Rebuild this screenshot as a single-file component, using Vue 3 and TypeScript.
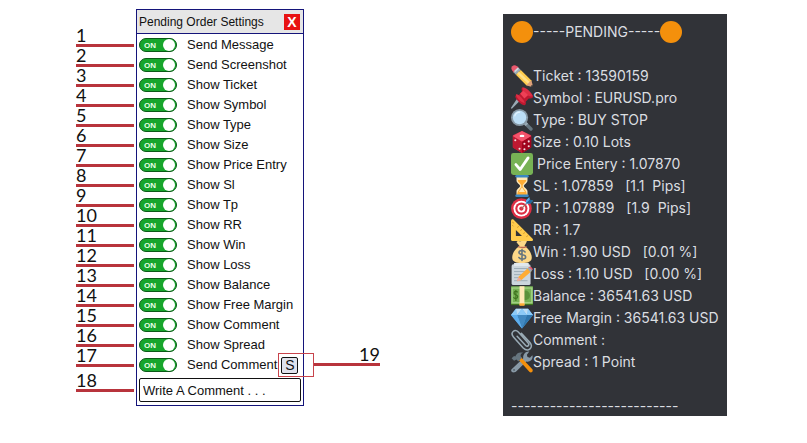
<script setup lang="ts">
import { reactive, ref } from 'vue'

interface Option {
  label: string
  on: boolean
}

interface Line {
  icon: string
  text: string
}

const options = reactive<Option[]>(
  [
    'Send Message',
    'Send Screenshot',
    'Show Ticket',
    'Show Symbol',
    'Show Type',
    'Show Size',
    'Show Price Entry',
    'Show Sl',
    'Show Tp',
    'Show RR',
    'Show Win',
    'Show Loss',
    'Show Balance',
    'Show Free Margin',
    'Show Comment',
    'Show Spread',
    'Send Comment',
  ].map((label) => ({ label, on: true })),
)

const comment = ref('Write A Comment . . .')

const lines: Line[] = [
  { icon: 'pencil', text: 'Ticket : 13590159' },
  { icon: 'pin', text: 'Symbol : EURUSD.pro' },
  { icon: 'lens', text: 'Type : BUY STOP' },
  { icon: 'die', text: 'Size : 0.10 Lots' },
  { icon: 'check', text: ' Price Entery : 1.07870' },
  { icon: 'hourglass', text: 'SL : 1.07859   [1.1  Pips]' },
  { icon: 'target', text: 'TP : 1.07889   [1.9  Pips]' },
  { icon: 'ruler', text: 'RR : 1.7' },
  { icon: 'bag', text: 'Win : 1.90 USD   [0.01 %]' },
  { icon: 'memo', text: 'Loss : 1.10 USD   [0.00 %]' },
  { icon: 'cash', text: 'Balance : 36541.63 USD' },
  { icon: 'gem', text: 'Free Margin : 36541.63 USD' },
  { icon: 'clip', text: 'Comment :' },
  { icon: 'tools', text: 'Spread : 1 Point' },
]
</script>

<template>
  <svg class="defs" aria-hidden="true">
    <symbol id="dot" viewBox="0 0 36 36"><circle cx="18" cy="18" r="18" fill="#f4900c" /></symbol>
    <symbol id="pencil" viewBox="0 0 36 36">
      <path fill="#ea596e" d="M2 9C0 6 0 4 2 2s5-2 8 0l3 3-8 8z" />
      <path fill="#99aab5" d="M4 12l8-8 4 4-8 8z" />
      <path fill="#ccd6dd" d="M5 10l6-6 2 2-6 6z" />
      <path fill="#ffcc4d" d="M8 16l8-8 17 17 1 6-3 3-6-1z" />
      <path fill="#ffe08a" d="M10 14l3-3 19 18-3 3z" />
      <path fill="#dda07a" d="M25 33l8-8 3 9c0 1-1 2-2 2z" />
      <path fill="#292f33" d="M32 35l3-3 1 3-1 1z" />
    </symbol>
    <symbol id="pin" viewBox="0 0 36 36">
      <path d="M17 20l-5-4L0 34l1 2z" fill="#99aab5" />
      <path d="M18 1c3-1 5 2 6 4l9 6c3 2 4 5 2 7-2 1-4 1-6 1l-5 5c1 3 0 6-2 6-4 0-14-9-15-14 0-3 3-4 6-3l5-6c-1-2-1-5 0-6z" fill="#be1931" />
      <path d="M19 1c5-2 17 10 16 14-5 3-18-8-16-14zM8 12c3-2 15 10 14 14C17 26 8 17 8 12z" fill="#dd2e44" />
      <path d="M15 11l5-5 8 7-6 6z" fill="#ef4056" />
    </symbol>
    <symbol id="lens" viewBox="0 0 36 36">
      <path d="M22 26l4-4 9 9c2 3-2 6-4 4z" fill="#66757f" />
      <path d="M21 25l4-4 3 3-4 4z" fill="#99aab5" />
      <circle cx="14" cy="14" r="14" fill="#8899a6" />
      <circle cx="14" cy="14" r="11" fill="#bbddf5" />
      <path d="M6 12c1-5 5-7 9-7" stroke="#e1f2fd" stroke-width="2" fill="none" />
    </symbol>
    <symbol id="die" viewBox="0 0 36 36">
      <path d="M18 0L3 7v20l15 9 15-9V7z" fill="#dd2e44" />
      <path d="M3 8l15 9v19L4 28c-1-1-1-2-1-3z" fill="#be1931" />
      <path d="M33 8l-15 9v19l14-8c1-1 1-2 1-3z" fill="#a0041e" />
      <path d="M18 0L3 8l15 9 15-9z" fill="#f4536b" />
      <ellipse cx="18" cy="8" rx="4" ry="2" fill="#fff" />
      <g fill="#f5dfe2"><circle cx="7" cy="15" r="1.7" /><circle cx="14" cy="29" r="1.7" /><circle cx="22" cy="21" r="1.7" /><circle cx="29" cy="17" r="1.7" /><circle cx="22" cy="30" r="1.7" /><circle cx="29" cy="25" r="1.7" /></g>
    </symbol>
    <symbol id="check" viewBox="0 0 36 36">
      <rect width="36" height="36" rx="4" fill="#77b255" />
      <path d="M8 19l7 8L28 8" fill="none" stroke="#fff" stroke-width="4.6" stroke-linecap="round" stroke-linejoin="round" />
    </symbol>
    <symbol id="hourglass" viewBox="0 0 36 36">
      <path d="M9 2h18v7c0 4-6 7-6 9s6 5 6 9v7H9v-7c0-4 6-7 6-9s-6-5-6-9z" fill="#ffe8b6" />
      <path d="M11 8h14c0 4-6 6-6 10s7 7 7 15H10c0-8 7-11 7-15s-6-6-6-10z" fill="#ffac33" />
      <path d="M18 20l5 8H13z" fill="#ffe8b6" />
      <rect x="7" width="22" height="4" rx="2" fill="#3b88c3" /><rect x="7" y="32" width="22" height="4" rx="2" fill="#3b88c3" />
    </symbol>
    <symbol id="target" viewBox="0 0 36 36">
      <circle cx="17" cy="19" r="17" fill="#dd2e44" /><circle cx="17" cy="19" r="13" fill="#fff" />
      <circle cx="17" cy="19" r="10" fill="#dd2e44" /><circle cx="17" cy="19" r="6.5" fill="#fff" /><circle cx="17" cy="19" r="3.5" fill="#dd2e44" />
      <path d="M17 19L30 6" stroke="#a66f62" stroke-width="2" />
      <path d="M24 11l1-6 5-5 1 5 5 1-5 5z" fill="#55acee" /><path d="M25 10l6-6 5 2-5 5z" fill="#269" />
    </symbol>
    <symbol id="ruler" viewBox="0 0 36 36">
      <path fill-rule="evenodd" d="M1 1c1-1 2-1 3 0l31 31c2 2 1 4-1 4H2c-1 0-2-1-2-2V3zM8 18v10h10z" fill="#ffcc4d" />
      <path d="M2 5l3 2M2 10l2 2M13 12l-3 2M18 17l-3 2M23 22l-3 2M28 27l-3 2" stroke="#c1851b" />
    </symbol>
    <symbol id="bag" viewBox="0 0 36 36">
      <path d="M14 8L9 2c3-4 5 0 8-2 3 1 7-3 9 1l-4 7c7 4 12 12 12 19 0 7-6 9-16 9S2 34 2 27C2 20 7 12 14 8z" fill="#fdd888" />
      <path d="M12 8c4 2 9 2 13 0l1 2c-5 3-11 2-15 0z" fill="#bf6952" />
      <path d="M23 18c-3-4-10-3-10 1 0 5 11 2 11 7 0 4-8 5-11 1M18 14v18" fill="none" stroke="#67757f" stroke-width="2.6" stroke-linecap="round" />
    </symbol>
    <symbol id="memo" viewBox="0 0 36 36">
      <rect x="1" y="2" width="31" height="34" rx="3" fill="#ccd6dd" />
      <path d="M5 0h24v5H5z" fill="#e1e8ed" />
      <path d="M5 9h22M5 14h20M5 19h15M5 24h12M5 29h22" stroke="#99aab5" stroke-width="1.5" />
      <path d="M12 23L29 7l5 6-17 15-7 2z" fill="#ffac33" /><path d="M12 23l5 5-7 2z" fill="#e6aaaa" />
      <path d="M27 9l3-3 5 5-3 4z" fill="#99aab5" /><path d="M29 7c2-3 8 1 6 5z" fill="#ea596e" />
    </symbol>
    <symbol id="cash" viewBox="0 0 36 36">
      <rect y="4" width="36" height="29" fill="#3e721d" /><rect width="36" height="29" y="2" rx="1" fill="#77b255" />
      <rect x="2" y="5" width="32" height="24" fill="none" stroke="#a6d388" stroke-width="2" />
      <circle cx="23" cy="17" r="8" fill="#5c913b" />
      <path d="M11 12c-2-3-6-2-6 1 0 4 6 2 6 6 0 4-5 4-7 1M8 8v18" fill="none" stroke="#3e721d" stroke-width="1.8" />
      <rect x="14" y="2" width="8" height="31" fill="#ffe8b6" /><rect x="14" y="30" width="8" height="4" fill="#ffac33" />
    </symbol>
    <symbol id="gem" viewBox="0 0 36 36">
      <path d="M8 3h20l8 10-18 22L0 13z" fill="#5dadec" />
      <path d="M8 3L0 13h10zM28 3l8 10H26z" fill="#8ccaf7" />
      <path d="M8 3h10l-8 10zM28 3H18l8 10z" fill="#bdddf4" /><path d="M18 3l-8 10h16z" fill="#8ccaf7" />
      <path d="M10 13h16l-8 22z" fill="#4289c1" /><path d="M26 13h10L18 35z" fill="#2f76ad" /><path d="M0 13h10l8 22z" fill="#5dadec" />
    </symbol>
    <symbol id="clip" viewBox="0 0 36 36">
      <path d="M10 12l14 15c3 3 7-1 4-4L12 5C6-1-2 6 4 13l16 18c8 8 18-1 11-9L17 7" fill="none" stroke="#99aab5" stroke-width="2.5" stroke-linecap="round" />
    </symbol>
    <symbol id="tools" viewBox="0 0 36 36">
      <path d="M4 35c-3 0-5-3-3-5l19-18c-1-6 4-12 10-11l-4 5 1 4 4 1 4-4c2 6-4 12-10 10L8 34c-1 1-3 1-4 1z" fill="#8899a6" />
      <circle cx="5" cy="31" r="1.5" fill="#546069" />
      <path d="M12 14l4-4 19 20c2 3-2 7-5 4z" fill="#f4900c" />
      <path d="M1 12l4-4 2 1C9 4 13 1 20 3c-3 1-5 3-4 6l2 2-6 6-3-3-4 2z" fill="#66757f" />
    </symbol>
  </svg>

  <main class="page">
    <section class="guide">
      <ol class="marks">
        <li v-for="n in 18" :key="n" class="mark">{{ n }}</li>
      </ol>

      <form class="panel" @submit.prevent>
        <header class="panel-head">
          <h1 class="panel-title">Pending Order Settings</h1>
          <button type="button" class="close" aria-label="Close">X</button>
        </header>
        <div v-for="(option, i) in options" :key="option.label" class="option">
          <label class="option-label">
            <input v-model="option.on" type="checkbox" class="check" />
            <span class="track"><span>{{ option.on ? 'ON' : 'OFF' }}</span><i class="knob"></i></span>
            <span class="option-text">{{ option.label }}</span>
          </label>
          <span v-if="i === options.length - 1" class="send-wrap">
            <button type="button" class="send">S</button>
            <i class="focus-box"></i>
          </span>
        </div>
        <input v-model="comment" type="text" class="comment" aria-label="Comment" />
      </form>

      <div class="mark side-mark">19</div>
    </section>

    <section class="message">
      <p class="line">
        <svg class="emoji"><use href="#dot" /></svg><span>-----PENDING-----</span><svg class="emoji"><use href="#dot" /></svg>
      </p>
      <p class="line"></p>
      <p v-for="line in lines" :key="line.icon" class="line">
        <svg class="emoji"><use :href="'#' + line.icon" /></svg><span>{{ line.text }}</span>
      </p>
      <p class="line"></p>
      <p class="line">--------------------------</p>
    </section>
  </main>
</template>

<style>
body {
  background: #fff;
}
</style>

<style scoped>
.defs {
  position: absolute;
  width: 0;
  height: 0;
}
.page {
  display: flex;
  justify-content: space-between;
  align-items: flex-start;
  box-sizing: border-box;
  padding: 9px 80px 27px 76px;
  font-family: "Liberation Sans", Arial, sans-serif;
}
.guide {
  display: flex;
}
.marks {
  width: 58px;
  margin: 18px 2px 0 0;
  padding: 0;
  list-style: none;
}
.mark {
  box-sizing: border-box;
  height: 20px;
  border-bottom: 3px solid #b8343c;
  color: #111;
  font: 18px/17px Lato, "Noto Sans", sans-serif;
}
.mark:last-child {
  margin-top: 5px;
}
.side-mark {
  align-self: flex-end;
  width: 66px;
  margin: 0 0 40px 10px;
  text-align: right;
}
.panel {
  box-sizing: border-box;
  width: 168px;
  border: 1px solid #14147a;
  background: #fff;
  color: #111;
  font-size: 13px;
}
.panel-head {
  display: flex;
  align-items: center;
  justify-content: space-between;
  height: 23px;
  padding: 0 3px 0 2px;
  border-bottom: 1px solid #14147a;
  background: #e6e6e6;
}
.panel-title {
  margin: 0;
  font-size: 12px;
  font-weight: 400;
}
.close {
  width: 16px;
  height: 16px;
  padding: 0;
  border: 0;
  background: #e81212;
  color: #fff;
  font: bold 14px/16px "Liberation Sans", Arial, sans-serif;
}
.option {
  display: flex;
  align-items: center;
  height: 20px;
  padding-left: 2px;
}
.panel-head + .option {
  margin-top: 1px;
}
.option-label {
  display: flex;
  align-items: center;
  gap: 10px;
  white-space: nowrap;
}
.option-text {
  padding-bottom: 2px;
}
.check {
  position: absolute;
  opacity: 0;
}
.track {
  display: flex;
  align-items: center;
  justify-content: space-between;
  box-sizing: border-box;
  width: 38px;
  height: 14px;
  padding: 0 1px 0 4px;
  border: 1px solid #0b5a17;
  border-radius: 7px;
  background: #17a52c;
  color: #e9ffe9;
  font-size: 8px;
  font-weight: 700;
}
.knob {
  width: 12px;
  height: 12px;
  border-radius: 50%;
  background: #fff;
}
.send-wrap {
  position: relative;
  display: flex;
  margin-left: 4px;
}
.send {
  width: 17px;
  height: 17px;
  padding: 0;
  border: 1px solid #111;
  border-radius: 2px;
  background: #dfe2ec;
  color: #111;
  font: 14px/15px "Liberation Sans", Arial, sans-serif;
}
.focus-box {
  position: absolute;
  top: -4px;
  left: -3px;
  width: 34px;
  height: 22px;
  border: 1px solid #c8444c;
}
.comment {
  display: block;
  box-sizing: border-box;
  width: calc(100% - 4px);
  height: 24px;
  margin: 3px 2px;
  padding: 0 3px;
  border: 1px solid #111;
  border-radius: 2px;
  background: #fff;
  color: #111;
  font: 13px "Liberation Sans", Arial, sans-serif;
}
.message {
  box-sizing: border-box;
  min-width: 224px;
  margin-top: 5px;
  padding: 7px 7px 0 8px;
  background: #313338;
  color: #dbdee1;
  font: 14px/22px Inter, "Noto Sans", sans-serif;
}
.line {
  display: flex;
  height: 22px;
  margin: 0;
  white-space: pre;
}
.line:last-child {
  height: 21px;
}
.emoji {
  width: 22px;
  height: 22px;
  flex: none;
}
</style>
